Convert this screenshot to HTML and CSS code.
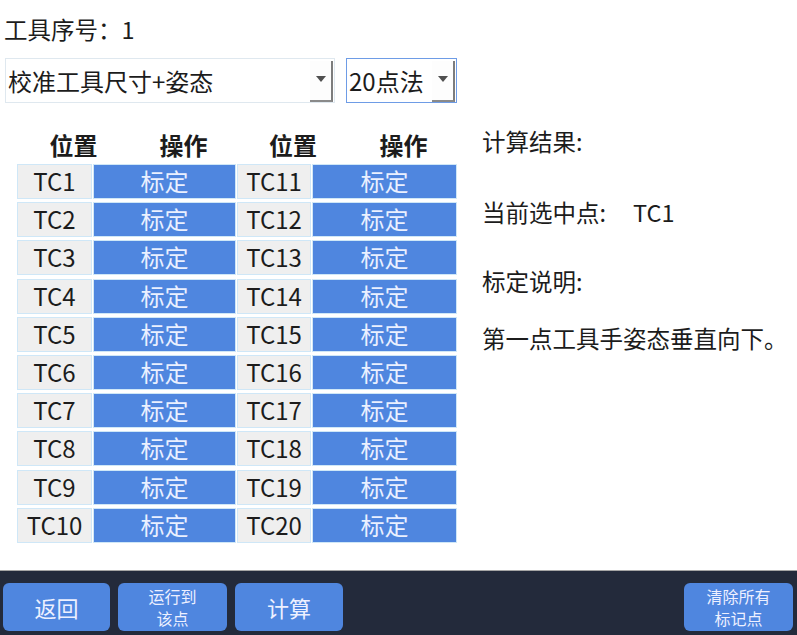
FILE: index.html
```html
<!DOCTYPE html>
<html lang="zh">
<head>
<meta charset="utf-8">
<title>工具标定</title>
<link rel="stylesheet" href="styles.css">
</head>
<body>
<div class="screen">
  <div class="main">
    <div class="title">工具序号：1</div>
    <div class="combos">
      <div class="combo combo-wide">
        <span class="combo-text">校准工具尺寸+姿态</span>
        <span class="combo-btn"><span class="tri"></span></span>
      </div>
      <div class="combo combo-small focused">
        <span class="combo-text">20点法</span>
        <span class="combo-btn"><span class="tri"></span></span>
      </div>
    </div>
    <div class="content">
      <div class="table">
        <div class="thead">
          <div class="th">位置</div>
          <div class="th">操作</div>
          <div class="th">位置</div>
          <div class="th">操作</div>
        </div>
        <div class="tbody">
          <div class="cell pos">TC1</div><div class="cell act">标定</div><div class="cell pos">TC11</div><div class="cell act">标定</div>
          <div class="cell pos">TC2</div><div class="cell act">标定</div><div class="cell pos">TC12</div><div class="cell act">标定</div>
          <div class="cell pos">TC3</div><div class="cell act">标定</div><div class="cell pos">TC13</div><div class="cell act">标定</div>
          <div class="cell pos">TC4</div><div class="cell act">标定</div><div class="cell pos">TC14</div><div class="cell act">标定</div>
          <div class="cell pos">TC5</div><div class="cell act">标定</div><div class="cell pos">TC15</div><div class="cell act">标定</div>
          <div class="cell pos">TC6</div><div class="cell act">标定</div><div class="cell pos">TC16</div><div class="cell act">标定</div>
          <div class="cell pos">TC7</div><div class="cell act">标定</div><div class="cell pos">TC17</div><div class="cell act">标定</div>
          <div class="cell pos">TC8</div><div class="cell act">标定</div><div class="cell pos">TC18</div><div class="cell act">标定</div>
          <div class="cell pos">TC9</div><div class="cell act">标定</div><div class="cell pos">TC19</div><div class="cell act">标定</div>
          <div class="cell pos">TC10</div><div class="cell act">标定</div><div class="cell pos">TC20</div><div class="cell act">标定</div>
        </div>
      </div>
      <div class="info">
        <div class="line l1">计算结果:</div>
        <div class="line l2">当前选中点:<span class="sel">TC1</span></div>
        <div class="line l3">标定说明:</div>
        <div class="line l4">第一点工具手姿态垂直向下。</div>
      </div>
    </div>
  </div>
  <div class="bar">
    <button class="btn big">返回</button>
    <button class="btn small">运行到<br>该点</button>
    <button class="btn big">计算</button>
    <button class="btn small push">清除所有<br>标记点</button>
  </div>
</div>
</body>
</html>
```
FILE: styles.css
```css
* { box-sizing: border-box; }
html, body { margin: 0; padding: 0; background: #ffffff; }
body {
  font-family: "Noto Sans CJK SC", "Noto Sans", sans-serif;
  color: #1c1c1c;
}
.screen {
  width: 797px;
  height: 635px;
  display: flex;
  flex-direction: column;
  overflow: hidden;
}
.main {
  height: 570px;
  display: flex;
  flex-direction: column;
}
.title {
  margin-top: 14px;
  margin-left: 4px;
  height: 30px;
  font-size: 23.5px;
  line-height: 30px;
  white-space: nowrap;
}
.combos {
  margin-top: 14px;
  margin-left: 5px;
  display: flex;
  gap: 11px;
}
.combo {
  height: 45px;
  display: flex;
  align-items: center;
  background: #ffffff;
  border: 1px solid #dfe8ef;
  font-size: 24px;
}
.combo-wide { width: 330px; }
.combo-small { width: 111px; }
.combo.focused { border: 1px solid #6e9ce6; }
.combo-text {
  flex: 1;
  padding-left: 2px;
  line-height: 43px;
  white-space: nowrap;
}
.combo-btn {
  width: 23px;
  height: 41px;
  margin-right: 1px;
  margin-top: 1px;
  display: flex;
  align-items: center;
  justify-content: center;
  border-right: 2px solid #7d7d7d;
  border-bottom: 2px solid #8a8a8a;
  background: #fdfdfd;
}
.tri {
  width: 0;
  height: 0;
  border-left: 5px solid transparent;
  border-right: 5px solid transparent;
  border-top: 6px solid #505050;
  margin-top: -2px;
}
.content {
  margin-top: 22px;
  display: flex;
  align-items: flex-start;
}
.table {
  margin-top: 3px;
  margin-left: 17px;
  width: 440px;
}
.thead, .tbody {
  display: grid;
  grid-template-columns: 75px 143px 74px 145px;
  column-gap: 1px;
}
.thead {
  margin-left: 19px;
  height: 34px;
}
.th {
  font-size: 24px;
  font-weight: bold;
  text-align: center;
  line-height: 34px;
}
.tbody {
  margin-top: 2px;
  row-gap: 3.2px;
}
.cell {
  height: 35px;
  border: 1px solid #cfe7f7;
  font-size: 24px;
  line-height: 32px;
  text-align: center;
}
.pos { background: #efefef; color: #1c1c1c; }
.act { background: #4f86df; color: #eaf0ff; }
.info {
  margin-left: 25px;
  font-size: 23.5px;
}
.line {
  height: 32px;
  line-height: 32px;
  white-space: nowrap;
}
.l2 { margin-top: 39px; }
.l3 { margin-top: 37px; }
.l4 { margin-top: 25px; }
.sel { margin-left: 27px; }
.bar {
  height: 65px;
  background: #232a3b;
  border-top: 1px solid #a5a5a5;
  display: flex;
  align-items: flex-start;
  padding: 12px 4px 0 3px;
  gap: 8px;
}
.btn {
  height: 48px;
  border: none;
  border-radius: 6px;
  background: #4f86df;
  color: #edf0ff;
  font-family: "Noto Sans CJK SC", "Noto Sans", sans-serif;
  padding: 0;
  display: flex;
  align-items: center;
  justify-content: center;
  text-align: center;
}
.btn.big { width: 107px; font-size: 22px; }
.btn.small { width: 109px; font-size: 16px; line-height: 22px; }
.btn.small + .btn.big { width: 108px; }
.push { margin-left: auto; }
```
